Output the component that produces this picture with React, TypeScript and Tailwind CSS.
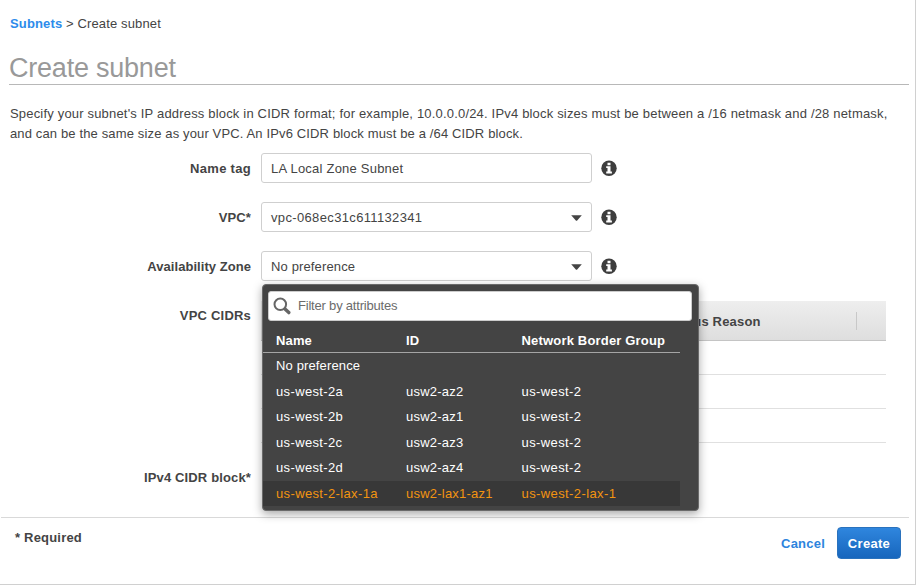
import React from "react";

const ZONES = [
  { name: "No preference", id: "", group: "" },
  { name: "us-west-2a", id: "usw2-az2", group: "us-west-2" },
  { name: "us-west-2b", id: "usw2-az1", group: "us-west-2" },
  { name: "us-west-2c", id: "usw2-az3", group: "us-west-2" },
  { name: "us-west-2d", id: "usw2-az4", group: "us-west-2" },
  { name: "us-west-2-lax-1a", id: "usw2-lax1-az1", group: "us-west-2-lax-1", active: true },
];

function InfoIcon() {
  return (
    <svg className="ml-[9px] h-4 w-4 shrink-0" viewBox="0 0 16 16">
      <circle cx="8" cy="8.2" r="7.7" fill="#3d3d3d" />
      <path d="M6.5 2.7h3v2.5h-3zM5.2 6.3h4.3v5.2h1.4v1.9H5.2v-1.9h1.3V8.1H5.2z" fill="#fff" />
    </svg>
  );
}

function Caret() {
  return (
    <svg className="mt-[1px] ml-auto h-[6px] w-[11px]" viewBox="0 0 11 6">
      <path d="M0.2 0.2h10.6L6.2 5.4q-.7.6-1.4 0z" fill="#444" />
    </svg>
  );
}

type FieldProps = {
  label: string;
  value: string;
  select?: boolean;
  labelClass?: string;
  valueClass?: string;
  children?: React.ReactNode;
};

function Field({ label, value, select, labelClass = "", valueClass = "", children }: FieldProps) {
  return (
    <div className="relative flex h-[30px] items-center">
      <label className={`w-[251px] pt-[2px] text-right font-bold ${labelClass}`}>{label}</label>
      <div className="ml-[10px] flex h-[30px] w-[331px] items-center rounded-[3px] border border-[#cfcfcf] bg-white pr-[9px] pl-[9px]">
        <span className={`pt-[2px] ${valueClass}`}>{value}</span>
        {select && <Caret />}
      </div>
      <InfoIcon />
      {children}
    </div>
  );
}

function ZoneMenu() {
  return (
    <div className="absolute top-[33px] left-[262px] z-10 h-[227px] w-[437px] rounded-[4px] border border-[#6a6a6a] bg-[#444] pt-[6px] text-white shadow-[0_3px_10px_rgba(0,0,0,0.35)]">
      <div className="ml-[5px] flex h-[30px] w-[424px] items-center rounded-[3px] border border-[#ccc] bg-white pl-[4px]">
        <svg className="h-[18px] w-[18px]" viewBox="0 0 18 18" fill="none" stroke="#666">
          <circle cx="7.3" cy="7.3" r="5.8" strokeWidth="2" />
          <path d="M12 12l3.8 3.6" strokeWidth="3.4" strokeLinecap="round" />
        </svg>
        <span className="ml-[7px] tracking-[-0.2px] text-[#6b6b6b]">Filter by attributes</span>
      </div>
      <div className="flex h-[32px] w-[417px] items-center border-b border-[#a5a5a5] pt-[9px] pb-[1px] pl-[13px] font-bold">
        <span className="w-[130px]">Name</span>
        <span className="w-[115.5px]">ID</span>
        <span className="tracking-[0.18px]">Network Border Group</span>
      </div>
      {ZONES.map((zone) => (
        <div
          key={zone.name}
          className={
            zone.active
              ? "flex h-[25.5px] w-[417px] items-center bg-[#383838] pt-[1px] pl-[13px] text-[#f29411]"
              : "flex h-[25.5px] w-[417px] items-center pt-[1px] pl-[13px]"
          }
        >
          <span className={zone.id ? "w-[130px] tracking-[0.36px]" : "w-[130px]"}>{zone.name}</span>
          <span className="w-[115.5px] tracking-[0.22px]">{zone.id}</span>
          <span className="tracking-[0.4px]">{zone.group}</span>
        </div>
      ))}
    </div>
  );
}

export default function App() {
  return (
    <div className="flex h-[585px] w-[916px] flex-col overflow-hidden border-r border-b border-[#d0d0d0] bg-white font-['Liberation_Sans',Arial,sans-serif] text-[13px] leading-5 tracking-[0.14px] text-[#444]">
      {/* Breadcrumb and title */}
      <div className="pt-[14px] pl-[10px]">
        <span className="font-bold text-[#2d8ceb]">Subnets</span> &gt; Create subnet
      </div>
      <h1 className="mt-[17px] mr-[6px] ml-[9px] h-[34px] border-b border-[#b8b8b8] text-[27px] leading-[35px] tracking-[-0.22px] text-[#999]">
        Create subnet
      </h1>
      <p className="mt-[19px] ml-[10px] whitespace-nowrap">
        <span className="tracking-[0.182px]">
          Specify your subnet's IP address block in CIDR format; for example, 10.0.0.0/24. IPv4 block sizes must be between a /16 netmask and /28 netmask,
        </span>
        <br />
        and can be the same size as your VPC. An IPv6 CIDR block must be a /64 CIDR block.
      </p>

      {/* Form */}
      <div className="mt-[9px] flex flex-col gap-[19px]">
        <Field label="Name tag" value="LA Local Zone Subnet" labelClass="tracking-[0.3px]" valueClass="tracking-[0.22px]" />
        <Field label="VPC*" value="vpc-068ec31c611132341" valueClass="tracking-[0.35px]" select />
        <Field label="Availability Zone" value="No preference" labelClass="tracking-[0.05px]" select>
          <ZoneMenu />
        </Field>
      </div>
      <div className="mt-[20px] flex">
        <span className="mt-[5px] w-[251px] text-right font-bold tracking-[0.2px]">VPC CIDRs</span>
        <div className="ml-[10px] w-[625px]">
          <div className="flex h-[40px] items-center border-b border-[#c4c4c4] bg-linear-to-b from-[#eee] to-[#dedede] pl-[407px] font-bold">
            <span className="pt-[2px] tracking-[0.18px]">Status Reason</span>
            <span className="mr-[29px] ml-auto h-[18px] border-r border-[#c8c8c8]"></span>
          </div>
          <div className="h-[34px] border-b border-[#e0e0e0]"></div>
          <div className="h-[34px] border-b border-[#e0e0e0]"></div>
          <div className="h-[34px] border-b border-[#e0e0e0]"></div>
        </div>
      </div>
      <span className="mt-[25px] w-[251px] text-right font-bold">IPv4 CIDR block*</span>

      {/* Footer */}
      <div className="mt-[29px] mr-[6px] ml-[1px] flex border-t border-[#d9d9d9]">
        <span className="mt-[10px] ml-[14px] font-bold tracking-[0.2px]">* Required</span>
        <div className="mt-[9px] mr-[8px] ml-auto flex items-center gap-[12px] font-bold">
          <button className="pt-[2px] tracking-[0.22px] text-[#2d84dd]">Cancel</button>
          <button className="h-[32px] w-[64px] rounded-[4px] border border-[#2a72bd] bg-linear-to-b from-[#2f86de] to-[#1766bd] pt-[2px] tracking-[0.3px] text-white">
            Create
          </button>
        </div>
      </div>
    </div>
  );
}
